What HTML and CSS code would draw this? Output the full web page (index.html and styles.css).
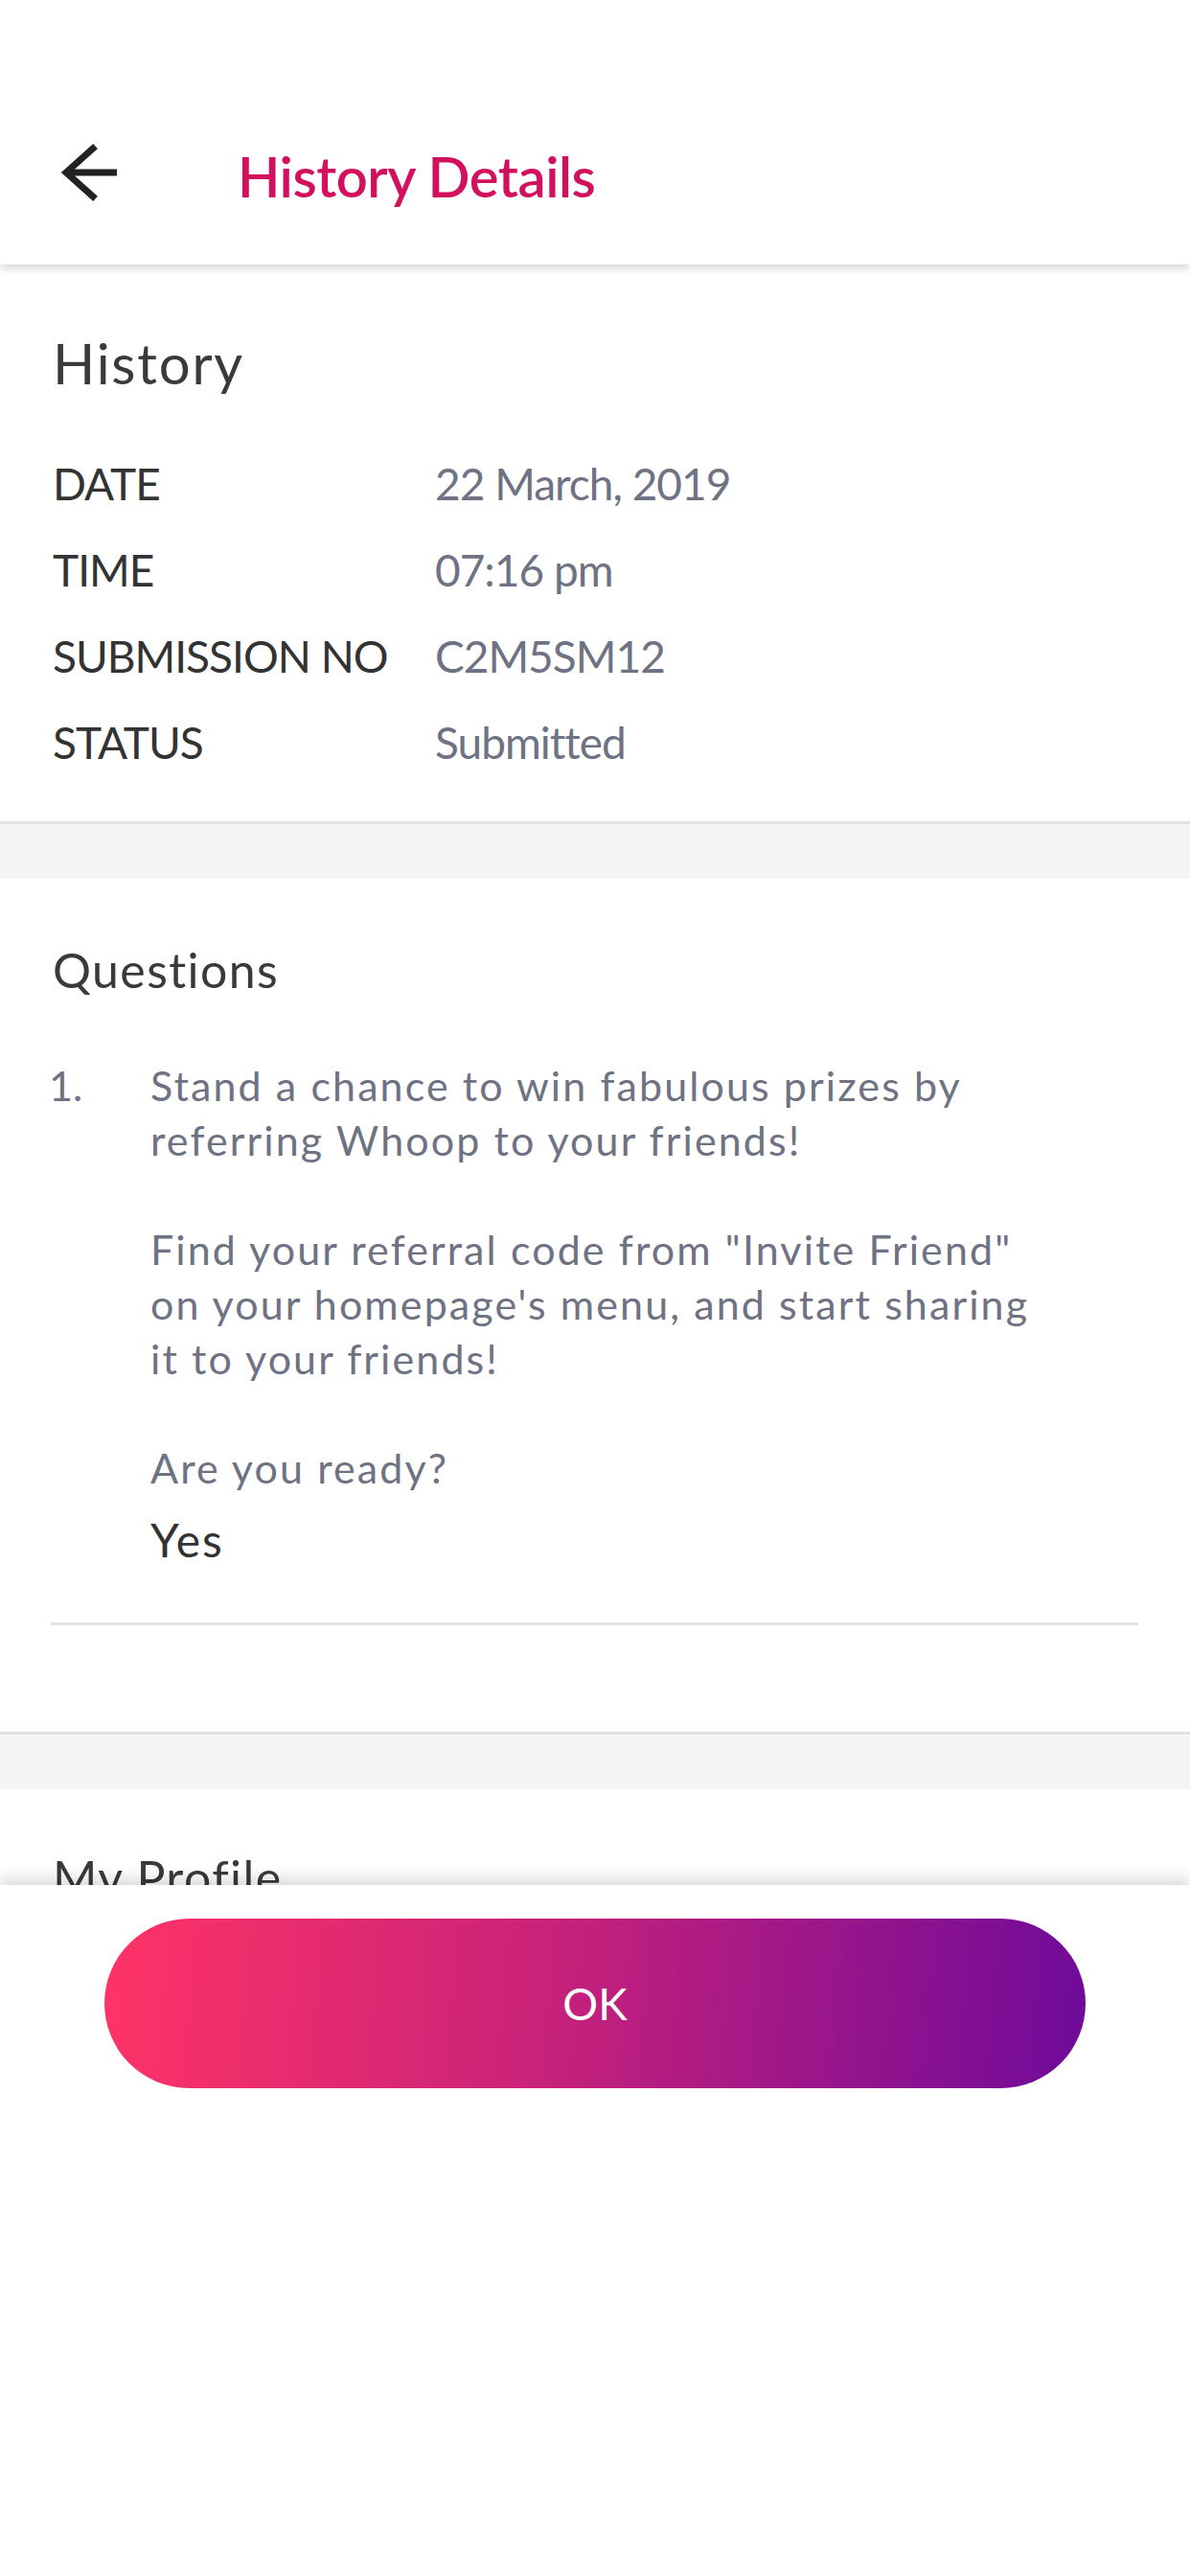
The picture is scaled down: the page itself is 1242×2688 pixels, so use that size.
FILE: index.html
```html
<!DOCTYPE html>
<html lang="en">
<head>
<meta charset="utf-8">
<title>History Details</title>
<link rel="stylesheet" href="styles.css">
</head>
<body>
<header class="appbar">
  <svg class="back" viewBox="0 0 64 64" width="64" height="64" aria-hidden="true">
    <polyline points="35,7 7,32 35,57" fill="none" stroke="#222" stroke-width="7" stroke-linecap="square" stroke-linejoin="miter"/>
    <line x1="9" y1="32" x2="60" y2="32" stroke="#222" stroke-width="7"/>
  </svg>
  <h1 class="title">History Details</h1>
</header>

<main class="content">
  <section class="card card-history">
    <h2 class="heading-lg">History</h2>
    <div class="info">
      <div class="label">DATE</div><div class="value">22 March, 2019</div>
      <div class="label">TIME</div><div class="value">07:16 pm</div>
      <div class="label">SUBMISSION NO</div><div class="value">C2M5SM12</div>
      <div class="label">STATUS</div><div class="value">Submitted</div>
    </div>
  </section>
  <div class="gap"></div>
  <section class="card card-questions">
    <h2 class="heading-md">Questions</h2>
    <div class="question">
      <div class="qnum">1.</div>
      <div class="qbody">
        <p class="qtext">Stand a chance to win fabulous prizes by<br>referring Whoop to your friends!<br><br>Find your referral code from "Invite Friend"<br>on your homepage's menu, and start sharing<br>it to your friends!<br><br>Are you ready?</p>
        <p class="answer">Yes</p>
      </div>
    </div>
    <hr class="divider">
  </section>
  <div class="gap"></div>
  <section class="card card-profile">
    <h2 class="heading-md">My Profile</h2>
  </section>
</main>

<footer class="bottom">
  <button class="ok" type="button">OK</button>
</footer>
</body>
</html>
```

FILE: styles.css
```css
* { box-sizing: border-box; }
html, body {
  margin: 0;
  padding: 0;
  background: #ffffff;
  font-family: "Lato", "Noto Sans", sans-serif;
  width: 1242px;
  height: 2688px;
  overflow: hidden;
}
h1, h2, p { margin: 0; font-weight: 400; }

.appbar {
  position: relative;
  z-index: 2;
  height: 276px;
  padding-top: 84px;
  display: flex;
  align-items: center;
  background: #fff;
  box-shadow: 0 3px 10px rgba(0, 0, 0, 0.2);
}
.back {
  margin-left: 62px;
  flex: 0 0 auto;
}
.title {
  margin-left: 122px;
  margin-top: 8px;
  font-size: 58px;
  line-height: 70px;
  font-weight: 600;
  color: #d3105e;
  letter-spacing: -0.5px;
}

.card {
  background: #fff;
  padding-left: 55px;
}
.card-history {
  padding-top: 68px;
  padding-bottom: 37px;
  border-bottom: 3px solid #e2e2e2;
}
.gap {
  height: 57px;
  background: #f5f5f5;
}
.heading-lg {
  font-size: 58px;
  line-height: 70px;
  color: #3a3a3a;
  letter-spacing: 1.8px;
}
.heading-md {
  font-size: 50px;
  line-height: 60px;
  color: #3a3a3a;
  letter-spacing: 1.4px;
}
.info {
  margin-top: 46px;
  display: grid;
  grid-template-columns: 399px 1fr;
  grid-auto-rows: 90px;
  font-size: 46px;
  line-height: 90px;
  letter-spacing: -1px;
}
.label { color: #333; }
.value { color: #6e7282; }

.card-questions {
  padding-top: 65px;
  padding-right: 54px;
  border-bottom: 3px solid #e2e2e2;
}
.question {
  margin-top: 62px;
  display: grid;
  grid-template-columns: 103px 1fr;
  margin-left: -4px;
}
.qnum, .qtext {
  font-size: 43px;
  line-height: 57px;
  color: #6e7282;
}
.qtext {
  white-space: nowrap;
  letter-spacing: 2.1px;
  margin-left: 3px;
}
.answer {
  margin-top: 18px;
  margin-left: 3px;
  font-size: 48px;
  line-height: 58px;
  color: #333;
  letter-spacing: 2px;
}
.divider {
  margin: 57px 0 111px -2px;
  border: 0;
  height: 3px;
  background: #e2e2e2;
}

.card-profile {
  padding-top: 62px;
  height: 200px;
}

.bottom {
  position: fixed;
  left: 0;
  right: 0;
  bottom: 0;
  height: 721px;
  background: #fff;
  z-index: 3;
  box-shadow: 0 -6px 16px rgba(0, 0, 0, 0.16);
  display: flex;
  justify-content: center;
  align-items: flex-start;
  padding-top: 35px;
}
.ok {
  width: 1024px;
  height: 177px;
  border: 0;
  border-radius: 89px;
  background: linear-gradient(95deg, #ff3366 0%, #c8227a 45%, #6e0a9a 100%);
  color: #fff;
  font-family: "Lato", "Noto Sans", sans-serif;
  font-size: 46px;
  font-weight: 400;
  padding: 0;
}
```
